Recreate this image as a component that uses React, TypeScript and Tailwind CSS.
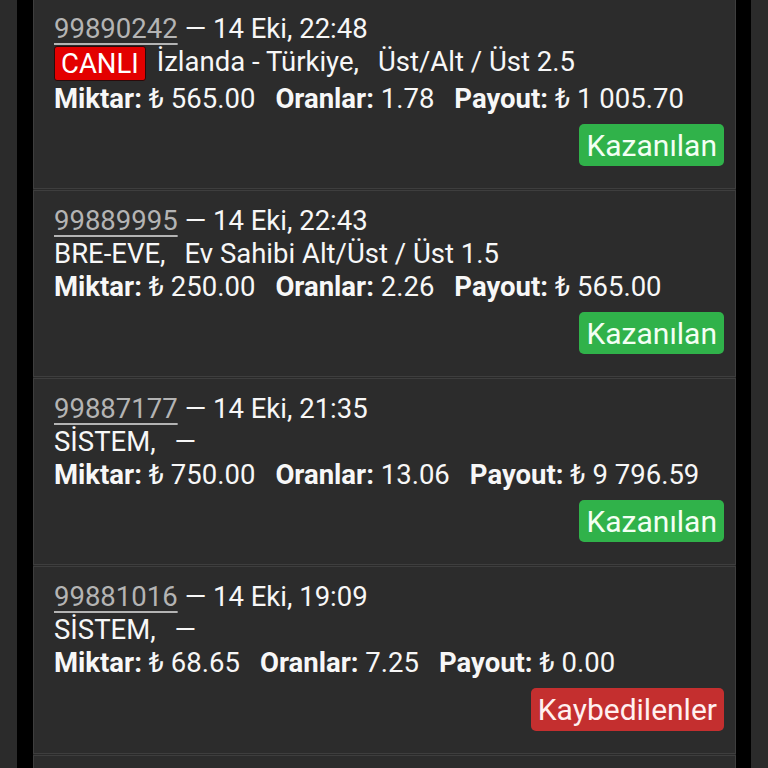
import React from "react";

type Bet = {
  id: string;
  date: string;
  live?: boolean;
  event: string;
  market: string;
  amount: string;
  odds: string;
  payout: string;
  status: "won" | "lost";
};

const bets: Bet[] = [
  {
    id: "99890242",
    date: "14 Eki, 22:48",
    live: true,
    event: "İzlanda - Türkiye,",
    market: "Üst/Alt / Üst 2.5",
    amount: "565.00",
    odds: "1.78",
    payout: "1 005.70",
    status: "won",
  },
  {
    id: "99889995",
    date: "14 Eki, 22:43",
    event: "BRE-EVE,",
    market: "Ev Sahibi Alt/Üst / Üst 1.5",
    amount: "250.00",
    odds: "2.26",
    payout: "565.00",
    status: "won",
  },
  {
    id: "99887177",
    date: "14 Eki, 21:35",
    event: "SİSTEM,",
    market: "—",
    amount: "750.00",
    odds: "13.06",
    payout: "9 796.59",
    status: "won",
  },
  {
    id: "99881016",
    date: "14 Eki, 19:09",
    event: "SİSTEM,",
    market: "—",
    amount: "68.65",
    odds: "7.25",
    payout: "0.00",
    status: "lost",
  },
];

function StatusBadge({ status }: { status: Bet["status"] }) {
  if (status === "won") {
    return (
      <span className="rounded-[5px] bg-[#30b24a] px-[7px] h-[42px] flex items-center text-[30px] text-[#f3fff3]">
        Kazanılan
      </span>
    );
  }
  return (
    <span className="rounded-[5px] bg-[#c42f2f] px-[7px] h-[43px] flex items-center text-[30px] text-[#fff0f0]">
      Kaybedilenler
    </span>
  );
}

function BetCard({ bet }: { bet: Bet }) {
  return (
    <div className="border border-[#3e3e3e] bg-[#2c2c2c] pl-[20px] pr-[11px] pt-[13px] pb-[22px] mb-[1px]">
      <div className="h-[33px] flex items-center">
        <span className="text-[#b4b4b4] underline underline-offset-[5px] decoration-[2px]">
          {bet.id}
        </span>
        <span className="ml-[7px]">— {bet.date}</span>
      </div>

      {/* event row, live bets get a red tag */}
      <div className={`${bet.live ? "mb-[4px]" : ""} h-[33px] flex items-center whitespace-pre`}>
        {bet.live && (
          <span className="mr-[11px] mt-[4px] h-[35px] flex items-center rounded-[3px] border-[1.5px] border-[#2a0a0a] bg-[#e30000] px-[6px] text-white">
            CANLI
          </span>
        )}
        <span>{bet.event}</span>
        <span className="ml-[19px]">{bet.market}</span>
      </div>

      <div className="h-[33px] flex items-center whitespace-pre">
        <span className="font-bold">Miktar:</span>
        <span> ₺ {bet.amount}</span>
        <span className="font-bold ml-[20px]">Oranlar:</span>
        <span> {bet.odds}</span>
        <span className="font-bold ml-[20px]">Payout:</span>
        <span> ₺ {bet.payout}</span>
      </div>

      <div className="flex justify-end mt-[9px]">
        <StatusBadge status={bet.status} />
      </div>
    </div>
  );
}

export default function App() {
  return (
    <div
      className="w-[768px] h-[768px] overflow-hidden flex bg-[#2a2a2a] text-[27.5px] leading-[33px] text-[#f7f7f7]"
      style={{ fontFamily: "Roboto, 'Noto Sans', sans-serif" }}
    >
      <div className="w-[17px] shrink-0 bg-[#2b2b2b]" />
      <div className="w-[16px] shrink-0 bg-black" />
      <div className="w-[703px] shrink-0 -mt-[2px]">
        {bets.map((b) => (
          <BetCard key={b.id} bet={b} />
        ))}
        <div className="border border-[#3e3e3e] bg-[#2c2c2c] h-[40px]" />
      </div>
      <div className="w-[15px] shrink-0 bg-black" />
      <div className="flex-1 bg-[#2b2b2b]" />
    </div>
  );
}
